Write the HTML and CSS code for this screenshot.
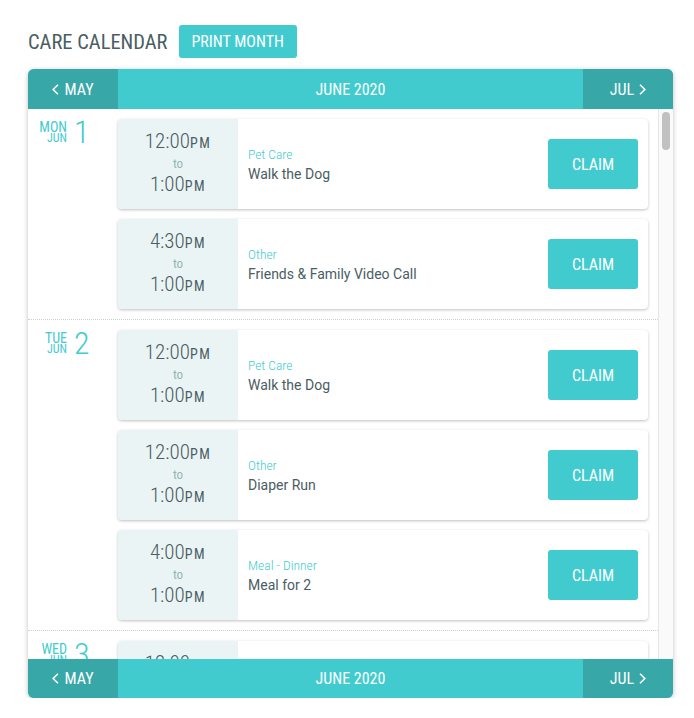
FILE: index.html
```html
<!DOCTYPE html>
<html lang="en">

<head>
    <meta charset="UTF-8">
    <meta name="viewport" content="width=device-width, initial-scale=1.0">

    <title>Care Calendar</title>
    <link rel="stylesheet" href="styles.css">
</head>
<body>
    <div class="page">
        <div class="top">
            <h1 class="title">Care Calendar</h1>
            <button class="print-btn">Print Month</button>
        </div>

        <div class="calendar">
            <div class="month-nav">
                <a class="nav-prev" href="#">
                    <svg width="7" height="11" viewBox="0 0 7 11"><polyline points="6,0.8 1.2,5.5 6,10.2" fill="none" stroke="#fff" stroke-width="1.6"/></svg>
                    May
                </a>
                <div class="nav-current">June 2020</div>
                <a class="nav-next" href="#">
                    Jul
                    <svg width="7" height="11" viewBox="0 0 7 11"><polyline points="1,0.8 5.8,5.5 1,10.2" fill="none" stroke="#fff" stroke-width="1.6"/></svg>
                </a>
            </div>

            <div class="days-body">
                <div class="days" id="days">
                    <!-- days are inserted here -->
                </div>
                <div class="scrollbar"><div class="scrollbar-thumb"></div></div>
            </div>

            <div class="month-nav bottom">
                <a class="nav-prev" href="#">
                    <svg width="7" height="11" viewBox="0 0 7 11"><polyline points="6,0.8 1.2,5.5 6,10.2" fill="none" stroke="#fff" stroke-width="1.6"/></svg>
                    May
                </a>
                <div class="nav-current">June 2020</div>
                <a class="nav-next" href="#">
                    Jul
                    <svg width="7" height="11" viewBox="0 0 7 11"><polyline points="1,0.8 5.8,5.5 1,10.2" fill="none" stroke="#fff" stroke-width="1.6"/></svg>
                </a>
            </div>
        </div>
    </div>

    <script>
        const weekdays = ['Mon', 'Tue', 'Wed', 'Thu', 'Fri', 'Sat', 'Sun'];

        // first days of the month, the rest just cycle through these
        const schedule = [
            [
                { start: '12:00', end: '1:00', type: 'Pet Care', title: 'Walk the Dog' },
                { start: '4:30', end: '1:00', type: 'Other', title: 'Friends & Family Video Call' }
            ],
            [
                { start: '12:00', end: '1:00', type: 'Pet Care', title: 'Walk the Dog' },
                { start: '12:00', end: '1:00', type: 'Other', title: 'Diaper Run' },
                { start: '4:00', end: '1:00', type: 'Meal - Dinner', title: 'Meal for 2' }
            ],
            [
                { start: '12:00', end: '1:00', type: 'Pet Care', title: 'Walk the Dog' },
                { start: '4:00', end: '1:00', type: 'Meal - Dinner', title: 'Meal for 2' }
            ]
        ];

        function eventCard(ev) {
            return `
                <div class="event">
                    <div class="event-time">
                        <div class="time">${ev.start}<span class="ampm">PM</span></div>
                        <div class="to">to</div>
                        <div class="time">${ev.end}<span class="ampm">PM</span></div>
                    </div>
                    <div class="event-info">
                        <div class="event-type">${ev.type}</div>
                        <div class="event-title">${ev.title}</div>
                    </div>
                    <div class="event-action">
                        <button class="claim-btn">Claim</button>
                    </div>
                </div>`;
        }

        function renderDays() {
            const daysEl = document.getElementById('days');
            let html = '';
            for (let d = 1; d <= 30; d++) {
                const events = schedule[(d - 1) % schedule.length];
                html += `
                <div class="day">
                    <div class="day-label">
                        <div class="day-name">${weekdays[(d - 1) % 7]}<span class="day-month">Jun</span></div>
                        <div class="day-num">${d}</div>
                    </div>
                    <div class="events">${events.map(eventCard).join('')}</div>
                </div>`;
            }
            daysEl.innerHTML = html;
        }

        renderDays();
    </script>
</body>

</html>
```

FILE: styles.css
```css
body {
    margin: 0;
    background-color: #fff;
    font-family: "Roboto", sans-serif;
    font-stretch: 75%;
    color: #4a5d63;
}

.page {
    padding: 25px 21px 0 28px;
}

.top {
    display: flex;
    align-items: center;
    gap: 11px;
    height: 33px;
}

.title {
    margin: 0;
    font-size: 20.5px;
    font-weight: normal;
    text-transform: uppercase;
}

.print-btn {
    height: 33px;
    padding: 0 13px;
    border: none;
    border-radius: 3px;
    background-color: #42cbce;
    color: #fff;
    font-family: inherit;
    font-stretch: 75%;
    font-size: 16px;
    text-transform: uppercase;
    cursor: pointer;
}

.calendar {
    margin-top: 11px;
    border-radius: 6px;
    overflow: hidden;
    box-shadow: 0 1px 5px rgba(0, 0, 0, 0.25);
}

.month-nav {
    display: grid;
    grid-template-columns: 90px 1fr 90px;
    height: 40px;
    background-color: #42cbce;
    color: #fff;
    font-size: 16px;
    text-transform: uppercase;
}

.month-nav.bottom {
    height: 39px;
}

.month-nav > * {
    display: flex;
    align-items: center;
    justify-content: center;
    gap: 5px;
    color: #fff;
    text-decoration: none;
}

.nav-prev,
.nav-next {
    background-color: #37a7a8;
}

.days-body {
    display: flex;
    height: 550px;
}

.days {
    flex: 1;
    overflow-y: scroll;
    scrollbar-width: none;
}

.scrollbar {
    width: 15px;
    flex-shrink: 0;
    padding: 3px 3px 0 3px;
    box-sizing: border-box;
    border-left: 1px solid #e6e6e6;
    background-color: #fafafa;
}

.scrollbar-thumb {
    height: 38px;
    border-radius: 4px;
    background-color: #c1c1c1;
}

.day {
    display: flex;
    padding: 10px 0;
    border-bottom: 1px dotted #cfcfcf;
}

.day-label {
    width: 90px;
    flex-shrink: 0;
    display: flex;
    align-items: flex-start;
    color: #42cbce;
}

.day-name {
    width: 39px;
    padding-top: 2px;
    text-align: right;
    font-size: 14px;
    line-height: 12px;
    text-transform: uppercase;
}

.day-month {
    display: block;
    font-size: 12px;
    line-height: 11px;
}

.day-num {
    margin-left: 7px;
    font-weight: 300;
    font-size: 32px;
    line-height: 26px;
}

.events {
    flex: 1;
    display: flex;
    flex-direction: column;
    gap: 10px;
    padding-right: 10px;
}

.event {
    display: flex;
    height: 90px;
    border-radius: 4px;
    overflow: hidden;
    background-color: #fff;
    box-shadow: 0 1px 3px rgba(0, 0, 0, 0.25);
}

.event-time {
    width: 120px;
    flex-shrink: 0;
    display: flex;
    flex-direction: column;
    justify-content: center;
    align-items: center;
    background-color: #ebf4f5;
}

.time {
    font-weight: 300;
    font-size: 21px;
    line-height: 21px;
}

.ampm {
    font-weight: normal;
    font-size: 14px;
    letter-spacing: 1.5px;
}

.to {
    font-size: 13px;
    line-height: 20px;
    color: #92b5b8;
}

.event-info {
    flex: 1;
    padding-left: 10px;
    display: flex;
    flex-direction: column;
    justify-content: center;
    gap: 4px;
}

.event-type {
    font-weight: 300;
    font-size: 13.5px;
    color: #42cbce;
}

.event-title {
    font-stretch: 100%;
    font-size: 14px;
}

.event-action {
    display: flex;
    align-items: center;
    padding-right: 10px;
}

.claim-btn {
    width: 90px;
    height: 50px;
    border: none;
    border-radius: 3px;
    background-color: #42cbce;
    color: #fff;
    font-family: inherit;
    font-stretch: 75%;
    font-size: 16px;
    text-transform: uppercase;
    cursor: pointer;
}
```
